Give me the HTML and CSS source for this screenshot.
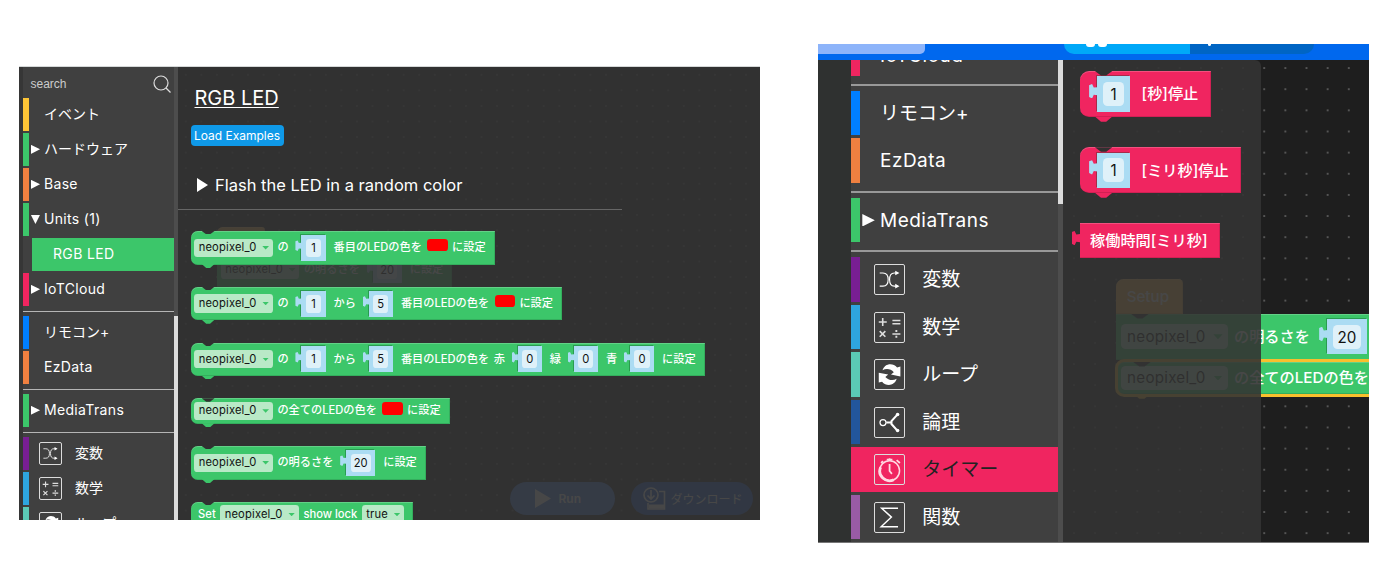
FILE: index.html
```
<!DOCTYPE html>
<html lang="ja">
<head>
    <meta charset="UTF-8">
    <meta name="viewport" content="width=device-width, initial-scale=1.0">
    <title>Block Editor</title>
    <link rel="stylesheet" href="styles.css">
</head>
<body>
    <svg class="defs" width="0" height="0">
        <symbol id="i-var" viewBox="0 0 31 31">
            <path d="M5 8.500h3.500q5.500 0 5.500 7t-5.500 7H5M24 8.500h-3.500q-5 0-5 7t5 7H24" fill="none" stroke="#fff" stroke-width="1.200"/>
            <path d="M21.500 6l4.500 2.500-4.500 2.500zM21.500 20l4.500 2.500-4.500 2.500z" fill="#fff"/>
        </symbol>
        <symbol id="i-math" viewBox="0 0 31 31">
            <path d="M4 9.500h8.500M8.200 5.200v8.500M18.500 8h8.500M18.500 11.500h8.500M5 19.300l6 6M11 19.300l-6 6M18.500 22.300h8.500" fill="none" stroke="#ddd" stroke-width="1.700"/>
            <path d="M21.700 18.200h2v2h-2zM21.700 24.300h2v2h-2z" fill="#ddd"/>
        </symbol>
        <symbol id="i-loop" viewBox="0 0 31 31">
            <path id="loop-half" d="M8 11C10 3.500 19 2.500 23.500 8L27 7V17.500L17 15.500 20 13C17 9.500 12 8.500 8 11z" fill="#fff"/>
            <path transform="rotate(180 15.5 15.5)" d="M8 11C10 3.500 19 2.500 23.500 8L27 7V17.500L17 15.500 20 13C17 9.500 12 8.500 8 11z" fill="#fff"/>
        </symbol>
        <symbol id="i-logic" viewBox="0 0 31 31">
            <circle cx="8.500" cy="15.500" r="3.200" fill="none" stroke="#fff" stroke-width="1.300"/>
            <path d="M12 15.500h5M23.800 7L17.500 14v3l6.300 7" fill="none" stroke="#fff" stroke-width="2.200"/>
            <circle cx="24" cy="7" r="1.900" fill="#fff"/>
            <circle cx="24" cy="24" r="1.900" fill="#fff"/>
        </symbol>
        <symbol id="i-timer" viewBox="0 0 31 31">
            <circle cx="15.500" cy="16.800" r="10.600" fill="none" stroke="#ffd9e2" stroke-width="1.600"/>
            <path d="M6 13A10.200 10.200 0 0 0 20 26.200" fill="none" stroke="#ffd9e2" stroke-width="3"/>
            <path d="M15.500 9.500v7.500l2.500 3M15.500 3.500v3M12.500 5h6M23 5.500l3.500 3M8.500 6.500l-2 2" fill="none" stroke="#ffd9e2" stroke-width="1.900"/>
        </symbol>
        <symbol id="i-sum" viewBox="0 0 31 31">
            <path d="M24.500 5.500H7L17.500 15 6.500 25.300H24.500" fill="none" stroke="#fff" stroke-width="1.500"/>
        </symbol>
    </svg>

    <div class="screen screen-units">
        <div class="edge"></div>
        <div class="toolbox">
            <div class="search">
                <span>search</span>
                <svg width="18" height="18" viewBox="0 0 18 18"><circle cx="8" cy="8" r="7" fill="none" stroke="#ddd" stroke-width="1.200"/><path d="M13 13l4.500 4.500" stroke="#ddd" stroke-width="1.200"/></svg>
            </div>
            <div class="row yellow"><i class="bar"></i><i></i><span>イベント</span></div>
            <div class="row green"><i class="bar"></i><i class="arrow"></i><span>ハードウェア</span></div>
            <div class="row orange en"><i class="bar"></i><i class="arrow"></i><span>Base</span></div>
            <div class="row green en"><i class="bar"></i><i class="arrow open"></i><span>Units (1)</span></div>
            <div class="row-child">RGB LED</div>
            <div class="row pink en"><i class="bar"></i><i class="arrow"></i><span>IoTCloud</span></div>
            <div class="sep"></div>
            <div class="row blue"><i class="bar"></i><i></i><span>リモコン+</span></div>
            <div class="row orange en"><i class="bar"></i><i></i><span>EzData</span></div>
            <div class="sep"></div>
            <div class="row green en"><i class="bar"></i><i class="arrow"></i><span>MediaTrans</span></div>
            <div class="sep"></div>
            <div class="row iconic purple"><i class="bar"></i><svg class="icon"><use href="#i-var"/></svg><span>変数</span></div>
            <div class="row iconic sky"><i class="bar"></i><svg class="icon"><use href="#i-math"/></svg><span>数学</span></div>
            <div class="row iconic teal"><i class="bar"></i><svg class="icon"><use href="#i-loop"/></svg><span>ループ</span></div>
        </div>
        <div class="scroll"><div class="thumb"></div></div>
        <div class="workspace">
            <div class="block hat placed setup-a">Setup</div>
            <div class="block placed bright-a">
                <span class="field">neopixel_0<i></i></span><span>の明るさを</span><span class="value"><b>20</b></span><span>に設定</span>
            </div>
            <div class="run-buttons">
                <div class="pill run"><svg width="16" height="19" viewBox="0 0 16 19"><path d="M0 0l16 9.500L0 19z" fill="#fff"/></svg>Run</div>
                <div class="pill download">
                    <svg width="23" height="23" viewBox="0 0 23 23" fill="none" stroke="#fff" stroke-width="1.600"><circle cx="8" cy="8" r="7"/><path d="M8 3v9M4.500 8.500L8 12l3.500-3.500M16 4.500h5.500V22H5v-6"/><path d="M6 19.500h15" stroke-width="4"/></svg>
                    ダウンロード
                </div>
            </div>

            <div class="flyout">
                <h1>RGB LED</h1>
                <button>Load Examples</button>
                <div class="example"><i class="arrow"></i>Flash the LED in a random color</div>
                <div class="blocks">
                    <div class="block">
                        <span class="field">neopixel_0<i></i></span><span>の</span><span class="value"><b>1</b></span><span>番目のLEDの色を</span><span class="color"></span><span>に設定</span>
                    </div>
                    <div class="block">
                        <span class="field">neopixel_0<i></i></span><span>の</span><span class="value"><b>1</b></span><span>から</span><span class="value"><b>5</b></span><span>番目のLEDの色を</span><span class="color"></span><span>に設定</span>
                    </div>
                    <div class="block">
                        <span class="field">neopixel_0<i></i></span><span>の</span><span class="value"><b>1</b></span><span>から</span><span class="value"><b>5</b></span><span>番目のLEDの色を</span><span>赤</span><span class="value"><b>0</b></span><span>緑</span><span class="value"><b>0</b></span><span>青</span><span class="value"><b>0</b></span><span>に設定</span>
                    </div>
                    <div class="block short">
                        <span class="field">neopixel_0<i></i></span><span>の全てのLEDの色を</span><span class="color"></span><span>に設定</span>
                    </div>
                    <div class="block">
                        <span class="field">neopixel_0<i></i></span><span>の明るさを</span><span class="value"><b>20</b></span><span>に設定</span>
                    </div>
                    <div class="block short">
                        <span class="first">Set</span><span class="field">neopixel_0<i></i></span><span>show lock</span><span class="field small">true<i></i></span>
                    </div>
                </div>
            </div>
        </div>
    </div>

    <div class="screen screen-timer">
        <div class="topbar">
            <div class="tab"></div>
            <div class="switch">
                <div class="on"><i></i><i></i></div>
                <div class="off"><i></i></div>
            </div>
        </div>
        <div class="editor">
            <div class="edge"></div>
            <div class="toolbox">
                <div class="row pink en"><i class="bar"></i><i></i><span>IoTCloud</span></div>
                <div class="sep"></div>
                <div class="row blue"><i class="bar"></i><i></i><span>リモコン+</span></div>
                <div class="row orange en"><i class="bar"></i><i></i><span>EzData</span></div>
                <div class="sep"></div>
                <div class="row green en"><i class="bar"></i><i class="arrow"></i><span>MediaTrans</span></div>
                <div class="sep"></div>
                <div class="row iconic purple"><i class="bar"></i><svg class="icon"><use href="#i-var"/></svg><span>変数</span></div>
                <div class="row iconic sky"><i class="bar"></i><svg class="icon"><use href="#i-math"/></svg><span>数学</span></div>
                <div class="row iconic teal"><i class="bar"></i><svg class="icon"><use href="#i-loop"/></svg><span>ループ</span></div>
                <div class="row iconic navy"><i class="bar"></i><svg class="icon"><use href="#i-logic"/></svg><span>論理</span></div>
                <div class="row iconic pink selected"><i class="bar"></i><svg class="icon"><use href="#i-timer"/></svg><span>タイマー</span></div>
                <div class="row iconic violet"><i class="bar"></i><svg class="icon"><use href="#i-sum"/></svg><span>関数</span></div>
            </div>
            <div class="scroll"><div class="thumb"></div></div>
            <div class="workspace">
                <div class="block hat placed setup-b">Setup</div>
                <div class="block placed bright-b">
                    <span class="field">neopixel_0<i></i></span><span>の明るさを</span><span class="value"><b>20</b></span>
                </div>
                <div class="block short placed color-b">
                    <span class="field">neopixel_0<i></i></span><span>の全てのLEDの色を</span>
                </div>

                <div class="flyout">
                    <div class="blocks">
                        <div class="block timer"><span class="value"><b>1</b></span><span>[秒]停止</span></div>
                        <div class="block timer"><span class="value"><b>1</b></span><span>[ミリ秒]停止</span></div>
                        <div class="block timer short output"><span class="first">稼働時間[ミリ秒]</span></div>
                    </div>
                </div>
            </div>
        </div>
    </div>
</body>
</html>
```

FILE: styles.css
```
* {
    box-sizing: border-box;
}
body {
    margin: 0;
    height: 579px;
    display: flex;
    align-items: flex-start;
    overflow: hidden;
    background: #fff;
    color: #fff;
    font-family: Inter, "Noto Sans CJK JP", sans-serif;
}
.defs {
    position: absolute;
}
.screen {
    overflow: hidden;
    flex: none;
}
.screen-units {
    width: 741px;
    height: 453px;
    margin: 67px 0 0 19px;
    display: flex;
    box-shadow: 0 -1px 0 #d5d8d8;
}
.screen-timer {
    width: 551px;
    height: 499px;
    margin: 44px 0 0 58px;
    border-bottom: 1px solid #777;
}

/* toolbox */
.edge {
    flex: none;
    width: 3.5px;
    background: #363636;
}
.toolbox {
    flex: none;
    display: flex;
    flex-direction: column;
    width: 151.5px;
    background: #404040;
    font-size: 14px;
    overflow: hidden;
}
.toolbox > * {
    flex: none;
}
.search {
    height: 31px;
    padding: 3px 3px 0 8px;
    display: flex;
    align-items: center;
    justify-content: space-between;
    font: 12px "Liberation Sans", sans-serif;
    color: #ccc;
}
.row {
    display: grid;
    grid-template-columns: .465em 1.065em 1fr;
    align-items: center;
    height: 2.34em;
    margin-bottom: .16em;
    line-height: 1;
    white-space: nowrap;
}
.row.iconic {
    grid-template-columns: .465em 3.285em 1fr;
}
.row.en,
.row-child {
    letter-spacing: .025em;
}
.bar {
    height: 100%;
    background: var(--c);
}
.arrow {
    width: .66em;
    height: .66em;
    margin-left: .13em;
    background: #fff;
    clip-path: polygon(0 0, 100% 50%, 0 100%);
}
.arrow.open {
    clip-path: polygon(0 0, 100% 0, 50% 100%);
}
.icon {
    width: 1.64em;
    height: 1.64em;
    margin-left: .72em;
    border: 1px solid #ddd;
    border-radius: 2px;
}
.row-child {
    height: 2.34em;
    margin: 0 0 .16em 9.5px;
    padding-left: 21px;
    line-height: 2.34em;
    background: #3cc66a;
}
.sep {
    height: 1px;
    margin: 3px 0 4px;
    background: #b5b5b5;
}
.yellow { --c: #fdc536; }
.green { --c: #3cc66a; }
.orange { --c: #f08040; }
.pink { --c: #f02560; }
.blue { --c: #007fff; }
.purple { --c: #781e93; }
.sky { --c: #2ea5df; }
.teal { --c: #5bc9b5; }
.navy { --c: #22569c; }
.violet { --c: #995ba5; }
.selected {
    background: var(--c);
    color: #222;
}
.scroll {
    flex: none;
    width: 4px;
    background: #4d4d4d;
}
.thumb {
    background: #dcdcdc;
}
.screen-units .thumb {
    height: 204px;
    margin-top: 249px;
}

/* workspace */
.workspace {
    --dot: 15.57px;
    position: relative;
    flex: 1;
    overflow: hidden;
    font-size: 11.2px;
    background: radial-gradient(circle, #555 .8px, transparent 1.2px) 0 0 / var(--dot) var(--dot) #1e1e1e;
}
.flyout {
    position: absolute;
    inset: 0;
    padding: 19px 0 0 12.5px;
    background: rgba(51, 51, 51, .9);
}
h1 {
    margin: 0 0 0 4px;
    font-size: 20px;
    line-height: 24px;
    font-weight: 400;
    text-decoration: underline;
    text-decoration-thickness: 1px;
    text-underline-offset: 2px;
}
button {
    display: block;
    width: 93px;
    height: 21px;
    margin-top: 14.5px;
    padding: 0;
    border: none;
    border-radius: 4px;
    background: #0f99e8;
    color: #fff;
    font: 12px Inter, sans-serif;
}
.example {
    display: flex;
    align-items: center;
    gap: 7px;
    width: 444px;
    height: 64px;
    margin-left: -12.5px;
    padding: 16px 0 0 19px;
    border-bottom: 1px solid #666;
    font-size: 16.5px;
}
.example .arrow {
    width: 11px;
    height: 14px;
    margin: 0;
}
.blocks {
    display: flex;
    flex-direction: column;
    align-items: flex-start;
    gap: 1.98em;
}
.screen-units .blocks {
    margin-top: 21.5px;
}

/* blocks */
.block {
    --c: #3cc66a;
    position: relative;
    display: flex;
    align-items: center;
    gap: .4em;
    height: 3em;
    padding: 0 .82em 0 .33em;
    border-radius: .6em 0 0 .6em;
    background: var(--c);
    box-shadow: inset 0 1px 0 rgba(255, 255, 255, .2), inset -1px -1px 0 rgba(0, 0, 0, .12);
    font-weight: 500;
    line-height: 1;
    white-space: nowrap;
}
.block.short {
    height: 2.28em;
}
.block.timer {
    --c: #f02560;
}
/* notch on top, bump below */
.block::before,
.block::after {
    content: "";
    position: absolute;
    left: 1em;
    top: 0;
    width: 1.15em;
    height: .3em;
    background: #313131;
    clip-path: polygon(0 0, 100% 0, 65% 100%, 35% 100%);
}
.block::after {
    top: calc(100% - .5px);
    height: .34em;
    background: var(--c);
}
.block .first {
    margin-left: .35em;
}
.field {
    display: flex;
    align-items: center;
    justify-content: space-between;
    width: 7.03em;
    height: 1.62em;
    padding: 0 .35em 0 .4em;
    border-radius: .3em;
    background: #b9e9c7;
    color: #111;
    font-weight: 400;
    letter-spacing: .015em;
}
.field.small {
    width: 3.8em;
}
.field i {
    width: .6em;
    height: .32em;
    background: #3cc66a;
    clip-path: polygon(0 0, 100% 0, 50% 100%);
}
.value {
    position: relative;
    display: flex;
    height: 2.32em;
    margin: 0 .32em 0 .74em;
    padding: .36em .4em;
    background: #abdcf3;
    box-shadow: -1px -1px 0 rgba(0, 60, 20, .3);
}
.timer .value {
    margin: 0 .36em 0 .82em;
}
.value::before,
.output::before {
    content: "";
    position: absolute;
    left: -.53em;
    top: .5em;
    width: .56em;
    height: .95em;
    background: #abdcf3;
    clip-path: polygon(100% 22%, 55% 25%, 35% 0, 0 8%, 0 90%, 35% 100%, 55% 75%, 100% 78%);
}
.value b {
    min-width: 1.36em;
    padding: 0 .28em;
    border-radius: .3em;
    background: #dff1f9;
    color: #111;
    font-weight: 400;
    text-align: center;
    line-height: 1.65em;
}
.color {
    width: 1.8em;
    height: 1.12em;
    margin: -.5em 0 0 .1em;
    border-radius: .3em;
    background: #f00;
}
.output {
    border-radius: 0;
}
.output::before {
    background: var(--c);
}
.output::after {
    display: none;
}

/* blocks dropped on the canvas */
.placed {
    position: absolute;
}
.hat {
    --c: #fab446;
    padding-left: .7em;
    border-radius: .5em .3em 0 0;
    height: 2.3em;
}
.hat::before {
    display: none;
}
.setup-a {
    left: 39px;
    top: 160px;
}
.bright-a {
    left: 39px;
    top: 186px;
    border-radius: 0;
}
.run-buttons {
    position: absolute;
    right: 7.5px;
    bottom: 5.5px;
    display: flex;
    gap: 15.5px;
    font-size: 12px;
}
.pill {
    display: flex;
    align-items: center;
    height: 32.5px;
    border-radius: 17px;
}
.run {
    width: 105.5px;
    padding-left: 25px;
    gap: 8px;
    background: #4782e7;
    font-weight: 600;
}
.download {
    width: 122px;
    padding-left: 12px;
    gap: 5px;
    background: #205fd0;
}

/* timer screen */
.topbar {
    display: flex;
    height: 16px;
    background: #0068ee;
}
.tab {
    width: 107px;
    height: 10px;
    border-radius: 0 0 5px 0;
    background: #8db4fa;
}
.switch {
    display: flex;
    height: 10px;
    margin-left: 139px;
}
.on {
    display: flex;
    gap: 3px;
    width: 126px;
    padding-left: 22px;
    border-radius: 0 0 0 18px;
    background: #00a8f8;
}
.off {
    width: 124px;
    padding-left: 18px;
    border-radius: 0 0 18px 0;
    background: #0065c4;
}
.on i,
.off i {
    display: block;
    width: 9px;
    height: 3px;
    border-radius: 0 0 3px 3px;
    background: #fff;
}
.off i {
    width: 3px;
    height: 2px;
}
.editor {
    display: flex;
    height: 483px;
}
.screen-timer .edge {
    width: 33px;
    background: #2f3130;
}
.screen-timer .toolbox {
    width: 207px;
    font-size: 19px;
}
.screen-timer .row:first-child {
    margin-top: -28.5px;
}
.screen-timer .row:first-child span {
    padding-top: 3px;
}
.screen-timer .sep {
    height: 2px;
    margin: 5px 0;
    background: #999;
}
.screen-timer .scroll {
    width: 5px;
}
.screen-timer .thumb {
    height: 144px;
}
.screen-timer .workspace {
    --dot: 21.15px;
    font-size: 15.2px;
    background-position: .4px -2.5px;
}
.screen-timer .flyout {
    right: auto;
    width: 198px;
    padding: 11px 0 0 16.7px;
    border-radius: 0 6px 0 0;
}
.timer {
    height: 3.03em;
}
.setup-b {
    left: 53px;
    top: 219px;
    width: 67px;
}
.bright-b {
    left: 53px;
    top: 254px;
    border-radius: 0;
}
.color-b {
    left: 52px;
    top: 299px;
    border: 3px solid #f9bf2d;
    padding-left: .2em;
}
.block.color-b {
    height: 38px;
}
.color-b::after {
    background: #f9bf2d;
}
```
